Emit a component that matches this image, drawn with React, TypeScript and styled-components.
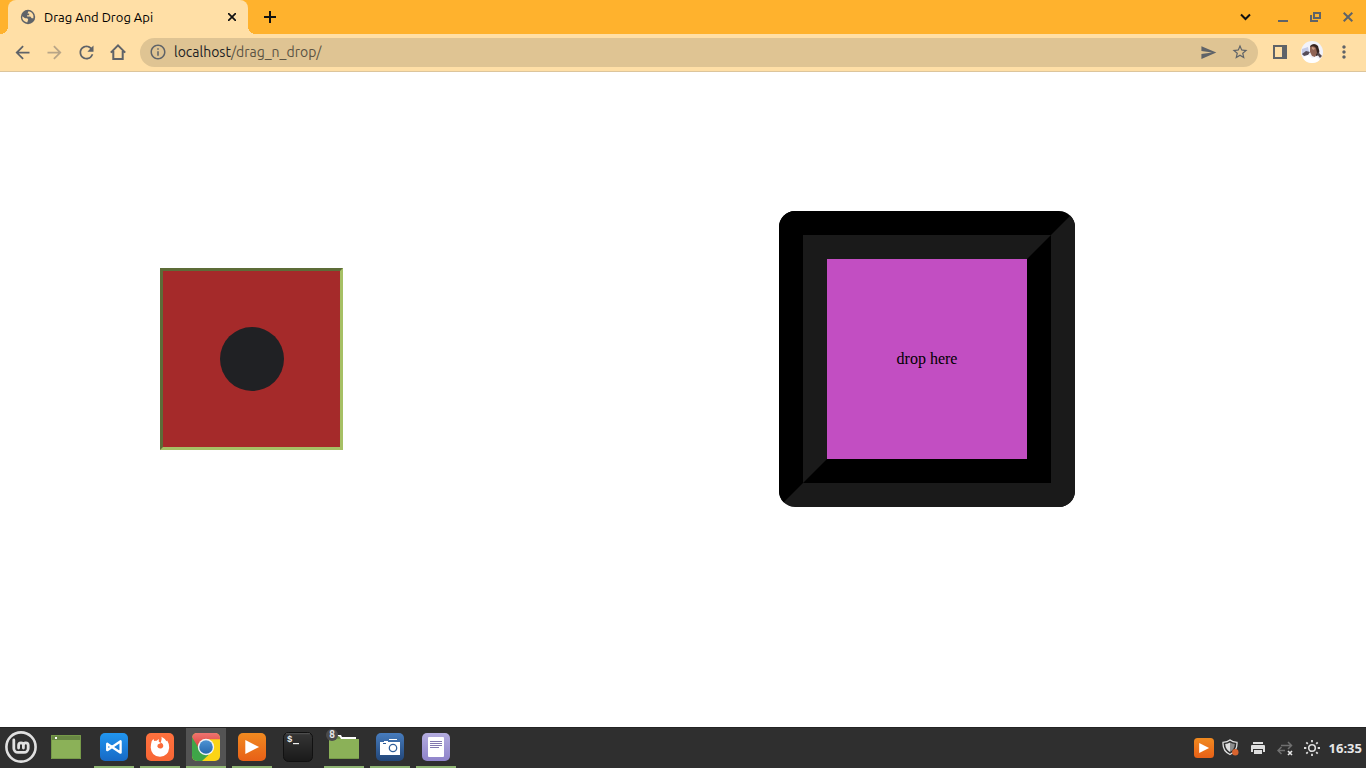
import React from "react";
import styled, { createGlobalStyle } from "styled-components";
import {
  MdArrowBack,
  MdArrowForward,
  MdInfoOutline,
  MdMoreVert,
  MdRefresh,
  MdSend,
  MdStarBorder,
} from "react-icons/md";

const GlobalStyle = createGlobalStyle`
  * { box-sizing: border-box; }
  body { margin: 0; background: #fff; }
  button { font: inherit; color: inherit; }
`;

const Screen = styled.div`
  display: flex;
  flex-direction: column;
  min-height: 100vh;
  font-family: Ubuntu, "Noto Sans", sans-serif;
`;

const TabStrip = styled.header`
  display: flex;
  align-items: center;
  height: 34px;
  padding: 0 2px 0 8px;
  background: #ffb22d;
`;

const Tab = styled.div`
  position: relative;
  display: flex;
  align-items: center;
  width: 240px;
  height: 34px;
  padding: 0 8px 0 12px;
  gap: 8px;
  border-radius: 8px 8px 0 0;
  background: #ffdfa6;
  color: #5f6368;

  &::before,
  &::after {
    content: "";
    position: absolute;
    bottom: 0;
    width: 8px;
    height: 8px;
  }
  &::before {
    right: 100%;
    background: radial-gradient(circle at 0 0, #ffb22d 8px, #ffdfa6 8px);
  }
  &::after {
    left: 100%;
    background: radial-gradient(circle at 100% 0, #ffb22d 8px, #ffdfa6 8px);
  }
`;

const TabTitle = styled.span`
  flex: 1;
  font-size: 13px;
  line-height: 18px;
  color: #000;
  white-space: nowrap;
`;

const IconButton = styled.button<{ $width?: number; $color?: string }>`
  display: flex;
  flex: none;
  align-items: center;
  justify-content: center;
  width: ${(p) => p.$width ?? 32}px;
  height: 28px;
  padding: 0;
  border: 0;
  background: none;
  color: ${(p) => p.$color ?? "#5f6368"};
`;

const Spacer = styled.div`
  flex: 1;
`;

const Toolbar = styled.nav`
  display: flex;
  align-items: center;
  height: 38px;
  padding: 0 6px 1px;
  background: #ffdfa6;
  border-bottom: 1px solid #dcc59c;
`;

const AddressBar = styled.form`
  display: flex;
  flex: 1;
  align-items: center;
  height: 29px;
  margin: 0 6px;
  padding: 0 2px 0 9px;
  gap: 7px;
  border-radius: 15px;
  background: #dfc493;
  color: #5f6368;
`;

const Address = styled.label`
  position: relative;
  flex: 1;
  display: flex;
  font-size: 14px;
  line-height: 20px;
  color: #5a5343;
`;

const Host = styled.span`
  color: #202124;
`;

const AddressInput = styled.input`
  position: absolute;
  inset: 0;
  width: 100%;
  border: 0;
  padding: 0;
  background: transparent;
  font: inherit;
  outline: none;
`;

const Page = styled.main`
  flex: 1;
  display: grid;
  grid-template-columns: 503fr 848fr;
  align-items: center;
  align-content: start;
  justify-items: center;
  padding: 139px 15px 0 0;
  font-family: "Liberation Serif", serif;
  font-size: 16px;
`;

const SourceBox = styled.section`
  display: flex;
  align-items: center;
  justify-content: center;
  width: 183px;
  height: 182px;
  border: 3px inset #a6c065;
  background: #a52a2a;
`;

const Ball = styled.div`
  width: 64px;
  height: 64px;
  border-radius: 50%;
  background: #202124;
`;

const DropFrame = styled.section`
  border: 24px solid;
  border-color: #000 #1a1a1a #1a1a1a #000;
  border-radius: 16px;
`;

const DropBox = styled.div`
  display: flex;
  align-items: center;
  justify-content: center;
  width: 248px;
  height: 248px;
  border: 24px solid;
  border-color: #1a1a1a #000 #000 #1a1a1a;
  background: #c24ec2 padding-box;
  color: #000;
`;

const Taskbar = styled.footer`
  display: flex;
  height: 41px;
  padding: 0 4px 0 0;
  border-top: 1px solid #242424;
  background: #2f2f2f;
`;

const AppList = styled.div`
  display: flex;
  gap: 6px;
`;

const Launchers = styled.div`
  display: flex;
  gap: 4px;
  padding-right: 2px;
`;

const AppButton = styled.button<{ $running?: boolean; $active?: boolean; $width?: number }>`
  position: relative;
  display: flex;
  align-items: center;
  justify-content: center;
  width: ${(p) => p.$width ?? 40}px;
  height: 40px;
  padding: 0;
  border: 0;
  border-bottom: 2px solid ${(p) => (p.$running ? "#8fb573" : "transparent")};
  background: ${(p) => (p.$active ? "#535353" : "transparent")};
  background-clip: padding-box;
`;

const Badge = styled.span`
  position: absolute;
  left: 2px;
  top: 1px;
  width: 12px;
  height: 12px;
  border-radius: 6px;
  background: #4b4b4b;
  color: #e6e6e6;
  font-size: 10px;
  font-weight: 700;
  line-height: 12px;
  text-align: center;
`;

const Tray = styled.div`
  display: flex;
  align-items: center;
  gap: 7px;
`;

const TrayButton = styled.button`
  display: flex;
  justify-content: center;
  width: 20px;
  padding: 0;
  border: 0;
  background: none;
`;

const Clock = styled.time`
  color: #e6e6e6;
  font-family: "Noto Sans", sans-serif;
  font-size: 13px;
  font-weight: 700;
  line-height: 20px;
`;

const GlobeIcon = () => (
  <svg width="16" height="16" viewBox="0 0 16 16">
    <circle cx="8" cy="8" r="7.200" fill="#5f6368" />
    <path
      fill="#ffdfa6"
      d="M2.300 7.200 5 9.200h2.200l1 1.300-1 2.900Q3.200 12.800 2.300 9.300zM8.500 2.300q3.700.4 4.900 4.200v2.700h-1.700L10.300 7.600H7.100V6.200h2.100V4.600H7.500z"
    />
  </svg>
);

const HomeIcon = () => (
  <svg width="18" height="18" viewBox="0 0 18 18" fill="none" stroke="#5f6368" strokeWidth="2">
    <path d="M1.8 9.6 9 2.3l7.2 7.3M4.3 8v8h9.4V8" />
  </svg>
);

const SidePanelIcon = () => (
  <svg width="14" height="14" viewBox="0 0 14 14">
    <path fill="#5f6368" fillRule="evenodd" d="M0 0h14v14H0zM2 2v10h7V2z" />
  </svg>
);

const Avatar = () => (
  <svg width="22" height="22" viewBox="0 0 22 22">
    <defs>
      <clipPath id="avatar-clip">
        <circle cx="11" cy="11" r="11" />
      </clipPath>
    </defs>
    <g clipPath="url(#avatar-clip)">
      <path fill="#f1f2fa" d="M0 0h22v22H0z" />
      <path fill="#c3cae6" d="M1 8l6-2 1 5-7 3z" />
      <path fill="#554d59" d="M1 13l4-3 4 1-2 3-4 1z" />
      <path fill="#35231f" d="M9 5q4-4 8 0 2 5 1 9l-3 1-4-4z" />
      <path fill="#8f6354" d="M9 6q4-2 6 1l1 5-2 4-3-1-2-4z" />
      <path fill="#c99b84" d="M11 6l3 1-1 2-2-1z" />
      <path fill="#54474d" d="M17 11l4 4-2 2-3-4z" />
      <path fill="#fff" d="M2 17l5-3 4 3 4-1 4 3-2 3H4z" />
    </g>
  </svg>
);

const MintIcon = () => (
  <svg width="32" height="32" viewBox="0 0 32 32" fill="none" stroke="#e0e0e0">
    <circle cx="16" cy="16" r="14.6" strokeWidth="2.6" />
    <path
      strokeWidth="2.8"
      strokeLinecap="round"
      d="M8.8 9v8.2a4.2 4.2 0 0 0 4.2 4.2h6a4.2 4.2 0 0 0 4.2-4.2v-2.9a2.4 2.4 0 0 0-4.8 0V17M18.4 17v-2.7a2.4 2.4 0 0 0-4.8 0V17"
    />
  </svg>
);

const DesktopIcon = () => (
  <svg width="30" height="24" viewBox="0 0 30 24">
    <path fill="#8bb158" d="M0 0h30v24H0z" />
    <path fill="#688743" d="M0 0h30v5H0z" />
    <path fill="#fff" d="M4 2h2v2H4z" />
    <path fill="none" stroke="#769a49" d="M.5.5h29v23H.5z" />
  </svg>
);

type TileProps = { id: string; from: string; to: string; size?: number; children: React.ReactNode };

const Tile = ({ id, from, to, size = 28, children }: TileProps) => (
  <svg width={size} height={size} viewBox="0 0 28 28">
    <defs>
      <linearGradient id={id} x2="0" y2="1">
        <stop stopColor={from} />
        <stop offset="1" stopColor={to} />
      </linearGradient>
    </defs>
    <rect width="28" height="28" rx="5" fill={`url(#${id})`} />
    {children}
  </svg>
);

const CodeIcon = () => (
  <Tile id="code" from="#2196f0" to="#1769c5">
    <path
      fill="none"
      stroke="#fff"
      strokeWidth="2.3"
      strokeLinejoin="round"
      d="M20.6 8.3v11.4l-8.600-5.700zM7.200 10.800v6.400L12 14zM20.600 8.300 12 14"
    />
  </Tile>
);

const FirefoxIcon = () => (
  <Tile id="firefox" from="#ff713e" to="#f76635">
    <path
      fill="#fff"
      d="M5.6 8.2 7.4 6l.9 2.1q1.2-.6 2.4-.3L12.8 6v2.8l2.1 1.3-3.1 1.3-.5 2q1.3 3 4.400 1.800 2.400-1.300 1.200-4-.8-1.400-2.100-1.800 1.400-3.400.7-5.700 3.600 1.800 4.900 4.600l.8-.9q2.400 3.800 2 7.400-.9 8.500-9.200 9-8.800-.4-9.300-9.200 0-3.300 1-6.400z"
    />
  </Tile>
);

const ChromeIcon = () => (
  <svg width="28" height="28" viewBox="0 0 28 28">
    <defs>
      <clipPath id="chrome-clip">
        <rect width="28" height="28" rx="5" />
      </clipPath>
      <linearGradient id="chrome-red" x2="0" y2="1">
        <stop stopColor="#ee7470" />
        <stop offset="1" stopColor="#d9423b" />
      </linearGradient>
      <linearGradient id="chrome-blue" x2="0" y2="1">
        <stop stopColor="#4d93d3" />
        <stop offset="1" stopColor="#2668ae" />
      </linearGradient>
    </defs>
    <g clipPath="url(#chrome-clip)">
      <path fill="#fbd415" d="M0 0h28v28H0z" />
      <path fill="#3fa548" d="M0 0 14 14l2.5 8L10 28H0z" />
      <path fill="url(#chrome-red)" d="M0 0h28v6.3H14L6.6 15 0 4z" />
      <circle cx="14" cy="14" r="8.2" fill="#f4f4f4" />
      <circle cx="14" cy="14" r="6.8" fill="url(#chrome-blue)" />
    </g>
  </svg>
);

const PlayerIcon = ({ id, size }: { id: string; size?: number }) => (
  <Tile id={id} from="#f08a20" to="#e86017" size={size}>
    <path fill="#fff" d="M7.3 7v14l13.8-7z" />
  </Tile>
);

const TerminalIcon = () => (
  <svg width="30" height="30" viewBox="0 0 30 30">
    <defs>
      <linearGradient id="terminal" x2="0" y2="1">
        <stop stopColor="#363636" />
        <stop offset="1" stopColor="#191919" />
      </linearGradient>
    </defs>
    <rect x=".5" y=".5" width="29" height="29" rx="5" fill="url(#terminal)" stroke="#111" />
    <path fill="none" stroke="#606060" strokeWidth=".7" d="M3 1.7h24" />
    <text x="4" y="10" fill="#eee" fontFamily="Liberation Mono, monospace" fontWeight="700" fontSize="9">
      $
    </text>
    <path fill="#eee" d="M10 11h6v1.200h-6z" />
  </svg>
);

const FilesIcon = () => (
  <svg width="30" height="26" viewBox="0 0 30 26">
    <path fill="#fff" d="M8 1h4l1 2h14v3H8z" />
    <path fill="#719146" d="M0 4q0-2 2-2h7q2 0 3 3H0z" />
    <path fill="#8bb158" d="M0 5h30v19q0 1-1 1H1q-1 0-1-1z" />
    <path fill="#769a49" d="M1 24h28v1H1z" />
  </svg>
);

const ScreenshotIcon = () => (
  <Tile id="screenshot" from="#477cbd" to="#224678">
    <path fill="#fff" d="M13 6h8v1h-8zM4 9h4V8h4v1h12v13H4z" />
    <path fill="#2d5c99" d="M7 10h3v1H7z" />
    <circle cx="17" cy="15" r="3.7" fill="#fff" stroke="#315f9a" strokeWidth="1.3" />
  </Tile>
);

const NotesIcon = () => (
  <Tile id="notes" from="#b4addf" to="#8e83ca">
    <rect x="6" y="4" width="16" height="20" rx="1" fill="#fff" />
    <path fill="none" stroke="#8278af" d="M8 8.5h12M8 10.5h12M8 12.5h12M8 14.5h9" />
  </Tile>
);

const ShieldIcon = () => (
  <svg width="18" height="18" viewBox="0 0 18 18">
    <path fill="none" stroke="#dedede" strokeWidth="1.3" d="M1 3.3Q5.5 3.3 8 1q2.5 2.3 7 2.3Q15.5 12 8 15.5.5 12 1 3.3z" />
    <path fill="#dedede" d="M3.2 5.1Q6 4.8 8 3.5V13Q3.5 10.5 3.2 5.1z" />
    <path fill="#8d8d8d" d="M8 3.5q2 1.3 4.8 1.6Q12.5 10.5 8 13z" />
    <circle cx="13.3" cy="13.3" r="3.2" fill="#d8642f" />
  </svg>
);

const PrinterIcon = () => (
  <svg width="16" height="16" viewBox="0 0 16 16" fill="#dedede">
    <path d="M3 2h10v2H3zM2 5h12q1 0 1 1v6h-2V9H3v3H1V6q0-1 1-1zM4 10h8v4H4z" />
  </svg>
);

const OfflineIcon = () => (
  <svg width="16" height="16" viewBox="0 0 16 16" fill="none">
    <path stroke="#707070" strokeWidth="1.5" d="M4 5.5h10M11 2l3.5 3.5L11 9M8 10.5H1M4.5 7 1 10.5 4.5 14" />
    <path stroke="#e6e6e6" strokeWidth="1.6" d="m11 11 4 4m0-4-4 4" />
  </svg>
);

const BrightnessIcon = () => (
  <svg width="16" height="16" viewBox="0 0 16 16" fill="none" stroke="#dedede">
    <circle cx="8" cy="8" r="3.3" strokeWidth="1.6" />
    <path
      strokeWidth="1.8"
      d="M8 0v2.300M8 13.700V16M0 8h2.300M13.700 8H16M2.300 2.300l1.500 1.500M12.200 12.200l1.500 1.500M2.300 13.700l1.500-1.500M12.200 3.800l1.500-1.500"
    />
  </svg>
);

export default function App() {
  return (
    <Screen>
      <GlobalStyle />
      <TabStrip>
        <Tab>
          <GlobeIcon />
          <TabTitle>Drag And Drog Api</TabTitle>
          <IconButton $width={16} $color="#111" aria-label="Close tab">
            <svg width="8" height="8" viewBox="0 0 8 8" stroke="currentColor" strokeWidth="1.7">
              <path d="m0 0 8 8M8 0 0 8" />
            </svg>
          </IconButton>
        </Tab>
        <IconButton $width={44} $color="#111" aria-label="New tab">
          <svg width="12" height="12" viewBox="0 0 12 12" stroke="currentColor" strokeWidth="2">
            <path d="M6 0v12M0 6h12" />
          </svg>
        </IconButton>
        <Spacer />
        <IconButton $width={44} $color="#111" aria-label="Search tabs">
          <svg width="12" height="8" viewBox="0 0 12 8" fill="none" stroke="currentColor" strokeWidth="2">
            <path d="m1 1.500 4.500 4.500L10 1.500" />
          </svg>
        </IconButton>
        <IconButton aria-label="Minimize">
          <svg width="12" height="12" viewBox="0 0 12 12">
            <path fill="currentColor" d="M0 9h10v2H0z" />
          </svg>
        </IconButton>
        <IconButton aria-label="Restore">
          <svg width="12" height="12" viewBox="0 0 12 12">
            <path fill="currentColor" fillRule="evenodd" d="M3 1h8v7H3zM5 3v3h4V3zM0 4h2v5h6v2H0z" />
          </svg>
        </IconButton>
        <IconButton aria-label="Close window">
          <svg width="10" height="10" viewBox="0 0 10 10" stroke="currentColor" strokeWidth="2">
            <path d="m.7.7 8.600 8.600M9.300.7.7 9.300" />
          </svg>
        </IconButton>
      </TabStrip>
      <Toolbar>
        <IconButton aria-label="Back">
          <MdArrowBack size={21} />
        </IconButton>
        <IconButton $color="#b8a587" aria-label="Forward">
          <MdArrowForward size={21} />
        </IconButton>
        <IconButton aria-label="Reload">
          <MdRefresh size={21} />
        </IconButton>
        <IconButton aria-label="Home">
          <HomeIcon />
        </IconButton>
        <AddressBar>
          <MdInfoOutline size={18} />
          <Address>
            <Host>localhost</Host>/drag_n_drop/
            <AddressInput aria-label="Address" />
          </Address>
          <IconButton type="button" $width={18} aria-label="Share">
            <MdSend size={17} />
          </IconButton>
          <IconButton type="button" aria-label="Bookmark">
            <MdStarBorder size={18} />
          </IconButton>
        </AddressBar>
        <IconButton aria-label="Side panel">
          <SidePanelIcon />
        </IconButton>
        <IconButton aria-label="Profile">
          <Avatar />
        </IconButton>
        <IconButton aria-label="Menu">
          <MdMoreVert size={20} />
        </IconButton>
      </Toolbar>
      <Page>
        <SourceBox>
          <Ball draggable />
        </SourceBox>
        <DropFrame>
          <DropBox>drop here</DropBox>
        </DropFrame>
      </Page>
      <Taskbar>
        <AppList>
          <Launchers>
            <AppButton $width={42} aria-label="Applications">
              <MintIcon />
            </AppButton>
            <AppButton aria-label="Show desktop">
              <DesktopIcon />
            </AppButton>
          </Launchers>
          <AppButton $running aria-label="Code editor">
            <CodeIcon />
          </AppButton>
          <AppButton $running aria-label="Firefox">
            <FirefoxIcon />
          </AppButton>
          <AppButton $running $active aria-label="Chrome">
            <ChromeIcon />
          </AppButton>
          <AppButton $running aria-label="Media player">
            <PlayerIcon id="player" />
          </AppButton>
          <AppButton aria-label="Terminal">
            <TerminalIcon />
          </AppButton>
          <AppButton $running aria-label="Files">
            <FilesIcon />
            <Badge>8</Badge>
          </AppButton>
          <AppButton $running aria-label="Screenshot">
            <ScreenshotIcon />
          </AppButton>
          <AppButton $running aria-label="Notes">
            <NotesIcon />
          </AppButton>
        </AppList>
        <Spacer />
        <Tray>
          <TrayButton aria-label="Media player">
            <PlayerIcon id="tray-player" size={20} />
          </TrayButton>
          <TrayButton aria-label="Updates">
            <ShieldIcon />
          </TrayButton>
          <TrayButton aria-label="Printers">
            <PrinterIcon />
          </TrayButton>
          <TrayButton aria-label="Network">
            <OfflineIcon />
          </TrayButton>
          <TrayButton aria-label="Brightness">
            <BrightnessIcon />
          </TrayButton>
          <Clock>16:35</Clock>
        </Tray>
      </Taskbar>
    </Screen>
  );
}
